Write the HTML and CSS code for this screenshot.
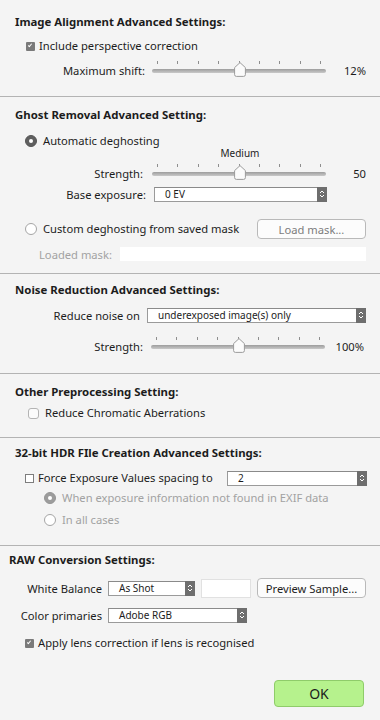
FILE: index.html
```html
<!DOCTYPE html>
<html lang="en">
<head>
    <meta charset="UTF-8">
    <meta name="viewport" content="width=device-width, initial-scale=1.0">
    <title>Advanced Settings</title>
    <link rel="stylesheet" href="styles.css">
</head>
<body>
    <main class="panel">

        <!-- image alignment -->
        <section class="group align">
            <h2>Image Alignment Advanced Settings:</h2>
            <label class="check ind-a"><span class="box box-on"></span>Include perspective correction</label>
            <div class="row slider-row">
                <span class="lbl">Maximum shift:</span>
                <div class="slider">
                    <div class="ticks"><i></i><i></i><i></i><i></i><i></i><i></i><i></i><i></i><i></i></div>
                    <div class="track"></div>
                    <svg class="knob" viewBox="0 0 12 15"><path d="M6 0.6 L11.4 5.6 V12.6 Q11.4 14.4 9.6 14.4 H2.4 Q0.6 14.4 0.6 12.6 V5.6 Z"/></svg>
                </div>
                <span class="val">12%</span>
            </div>
        </section>

        <!-- ghost removal -->
        <section class="group ghost">
            <h2>Ghost Removal Advanced Setting:</h2>
            <label class="check ind-r"><span class="radio radio-on"></span>Automatic deghosting</label>
            <div class="row slider-row medium-row">
                <span class="lbl">Strength:</span>
                <div class="slider">
                    <span class="tip">Medium</span>
                    <div class="ticks"><i></i><i></i><i></i><i></i><i></i><i></i><i></i><i></i><i></i></div>
                    <div class="track"></div>
                    <svg class="knob" viewBox="0 0 12 15"><path d="M6 0.6 L11.4 5.6 V12.6 Q11.4 14.4 9.6 14.4 H2.4 Q0.6 14.4 0.6 12.6 V5.6 Z"/></svg>
                </div>
                <span class="val">50</span>
            </div>
            <div class="row exposure-row">
                <span class="lbl">Base exposure:</span>
                <div class="select sel-exposure"><span>0 EV</span><b class="cap"><svg viewBox="0 0 8 12"><path d="M2 5 L4 3 L6 5 M2 7 L4 9 L6 7"/></svg></b></div>
            </div>
            <div class="row custom-row">
                <label class="check ind-r"><span class="radio"></span>Custom deghosting from saved mask</label>
                <button class="btn btn-off">Load mask...</button>
            </div>
            <div class="row mask-row">
                <span class="muted">Loaded mask:</span>
                <div class="field field-mask"></div>
            </div>
        </section>

        <!-- noise reduction -->
        <section class="group noise">
            <h2>Noise Reduction Advanced Settings:</h2>
            <div class="row noise-row">
                <span class="lbl">Reduce noise on</span>
                <div class="select sel-noise"><span>underexposed image(s) only</span><b class="cap"><svg viewBox="0 0 8 12"><path d="M2 5 L4 3 L6 5 M2 7 L4 9 L6 7"/></svg></b></div>
            </div>
            <div class="row slider-row">
                <span class="lbl">Strength:</span>
                <div class="slider">
                    <div class="ticks"><i></i><i></i><i></i><i></i><i></i><i></i><i></i><i></i><i></i></div>
                    <div class="track"></div>
                    <svg class="knob" viewBox="0 0 12 15"><path d="M6 0.6 L11.4 5.6 V12.6 Q11.4 14.4 9.6 14.4 H2.4 Q0.6 14.4 0.6 12.6 V5.6 Z"/></svg>
                </div>
                <span class="val">100%</span>
            </div>
        </section>

        <!-- other -->
        <section class="group other">
            <h2>Other Preprocessing Setting:</h2>
            <label class="check ind-c"><span class="box box-round"></span>Reduce Chromatic Aberrations</label>
        </section>

        <!-- 32 bit -->
        <section class="group hdr">
            <h2>32-bit HDR FIle Creation Advanced Settings:</h2>
            <div class="row force-row">
                <label class="check ind-r"><span class="box box-thin"></span>Force Exposure Values spacing to</label>
                <div class="select sel-force"><span>2</span><b class="cap"><svg viewBox="0 0 8 12"><path d="M2 5 L4 3 L6 5 M2 7 L4 9 L6 7"/></svg></b></div>
            </div>
            <label class="check ind-sub muted"><span class="radio radio-dis"></span>When exposure information not found in EXIF data</label>
            <label class="check ind-sub muted all-row"><span class="radio"></span>In all cases</label>
        </section>

        <!-- raw -->
        <section class="group raw">
            <h2>RAW Conversion Settings:</h2>
            <div class="row wb-row">
                <span class="lbl">White Balance</span>
                <div class="select sel-wb"><span>As Shot</span><b class="cap"><svg viewBox="0 0 8 12"><path d="M2 5 L4 3 L6 5 M2 7 L4 9 L6 7"/></svg></b></div>
                <div class="field field-wb"></div>
                <button class="btn">Preview Sample...</button>
            </div>
            <div class="row cp-row">
                <span class="lbl">Color primaries</span>
                <div class="select sel-cp"><span>Adobe RGB</span><b class="cap"><svg viewBox="0 0 8 12"><path d="M2 5 L4 3 L6 5 M2 7 L4 9 L6 7"/></svg></b></div>
            </div>
            <label class="check ind-r lens-row"><span class="box box-on"></span>Apply lens correction if lens is recognised</label>
            <div class="actions">
                <button class="ok">OK</button>
            </div>
        </section>

    </main>
</body>
</html>
```

FILE: styles.css
```css
:root {
--bg: #f4f4f4;
--line: #b3b3b3;
--ink: #1c1c1c;
--grey: #a2a2a2;
--cap: #6e6e6e;
}

*,
*::before,
*::after {
box-sizing: border-box;
}

body {
margin: 0;
background: var(--bg);
font-family: "Noto Sans", "DejaVu Sans", sans-serif;
font-size: 11.2px;
color: var(--ink);
}

.panel {
width: 380px;
height: 720px;
display: flex;
flex-direction: column;
}

.group {
display: flex;
flex-direction: column;
border-bottom: 1px solid var(--line);
padding-left: 15px;
padding-right: 14px;
}

h2 {
margin: 0;
font-size: 11.4px;
font-weight: 700;
line-height: 16px;
height: 16px;
}

.row {
display: flex;
align-items: center;
}

.check {
display: flex;
align-items: center;
height: 16px;
line-height: 16px;
white-space: nowrap;
}

.muted {
color: var(--grey);
}

.ind-a { margin-left: 11px; }
.ind-r { margin-left: 10px; }
.ind-c { margin-left: 13px; }
.ind-sub { margin-left: 29px; }

/* checkboxes + radios */
.box {
flex: none;
width: 9px;
height: 9px;
margin-right: 4px;
position: relative;
}

.box-on {
background: #7a7a7a;
border-radius: 1px;
}

.box-on::after {
content: "";
position: absolute;
left: 3px;
top: 1px;
width: 2px;
height: 4px;
border: solid #fff;
border-width: 0 1px 1px 0;
transform: rotate(40deg);
}

.box-round {
width: 11px;
height: 11px;
border: 1px solid #b4b4b4;
border-radius: 3px;
background: #fbfbfb;
margin-right: 6px;
}

.box-thin {
border: 1px solid #7d7d7d;
background: #fff;
}

.radio {
flex: none;
width: 12px;
height: 12px;
border-radius: 50%;
border: 1px solid #a5a5a5;
background: #fff;
margin-right: 6px;
position: relative;
}

.radio-on {
background: #5f5f5f;
border-color: #555;
}

.radio-on::after,
.radio-dis::after {
content: "";
position: absolute;
left: 3px;
top: 3px;
width: 4px;
height: 4px;
border-radius: 50%;
background: #fff;
}

.radio-dis {
background: #9c9c9c;
border-color: #959595;
}

/* label column */
.lbl {
flex: none;
text-align: right;
white-space: nowrap;
}

/* slider */
.slider-row {
height: 20px;
}

.slider {
position: relative;
width: 174px;
height: 20px;
}

.ticks {
display: flex;
justify-content: space-between;
padding: 0 5px 0 5px;
height: 4px;
margin-top: 1px;
}

.ticks i {
width: 1px;
height: 3px;
background: #8e8e8e;
}

.track {
margin-top: 4px;
height: 4px;
border-radius: 2px;
background: linear-gradient(#9d9d9d, #c9c9c9);
}

.knob {
position: absolute;
left: 82px;
top: 2px;
width: 12px;
height: 15px;
}

.knob path {
fill: #fbfbfb;
stroke: #9b9b9b;
stroke-width: 1;
}

.tip {
position: absolute;
left: 66px;
top: -16px;
width: 44px;
text-align: center;
font-size: 10px;
line-height: 12px;
}

.val {
flex: none;
width: 40px;
text-align: right;
}

/* select */
.select {
display: flex;
align-items: center;
height: 15px;
border: 1px solid #9a9a9a;
border-top-color: #8a8a8a;
background: #fff;
font-size: 10px;
padding-left: 10px;
}

.select span {
flex: 1;
white-space: nowrap;
}

.cap {
flex: none;
width: 10px;
height: 15px;
margin-right: -1px;
background: var(--cap);
display: flex;
align-items: center;
justify-content: center;
}

.cap svg {
width: 8px;
height: 12px;
}

.cap path {
fill: none;
stroke: #fff;
stroke-width: 1;
}

/* buttons */
.btn {
height: 20px;
padding: 0;
border: 1px solid #b9b9b9;
border-radius: 4px;
background: #fcfcfc;
font-family: inherit;
font-size: 11.2px;
color: var(--ink);
}

.btn-off {
color: #7c7c7c;
}

.field {
height: 14px;
background: #fff;
}

/* section 1 */
.align {
padding-top: 14px;
height: 97px;
}

.align .check { margin-top: 8px; }
.align .slider-row { margin-top: 6px; }
.align .lbl { width: 130px; }
.align .slider { margin-left: 7px; }

/* section 2 */
.ghost {
padding-top: 10px;
height: 177px;
}

.ghost > .check { margin-top: 10px; }
.ghost .medium-row { margin-top: 14px; }
.medium-row .lbl { width: 128px; }
.medium-row .slider { margin-left: 9px; }
.exposure-row { margin-top: 3px; height: 16px; }
.exposure-row .lbl { width: 131px; }
.sel-exposure { width: 173px; margin-left: 8px; }
.custom-row { margin-top: 17px; height: 20px; justify-content: space-between; }
.custom-row .btn { width: 109px; }
.mask-row { margin-top: 8px; height: 14px; }
.mask-row .muted { margin-left: 24px; width: 81px; }
.field-mask { flex: 1; }

/* section 3 */
.noise {
padding-top: 8px;
height: 100px;
}

.noise-row { margin-top: 9px; height: 16px; }
.noise-row .lbl { width: 125px; }
.sel-noise { width: 220px; margin-left: 7px; }
.noise .slider-row { margin-top: 13px; }
.noise .slider-row .lbl { width: 128px; }
.noise .slider { margin-left: 8px; }
.noise .val { width: 39px; }

/* section 4 */
.other {
padding-top: 10px;
height: 64px;
}

.other .check { margin-top: 5px; }

/* section 5 */
.hdr {
padding-top: 7px;
height: 108px;
}

.force-row { margin-top: 9px; height: 16px; }
.sel-force { width: 140px; margin-left: auto; margin-right: -1px; }
.hdr > .check { margin-top: 4px; }
.hdr > .all-row { margin-top: 6px; }

/* section 6 */
.raw {
padding-top: 6px;
padding-left: 9px;
border-bottom: none;
flex: 1;
}

.wb-row { margin-top: 10px; height: 20px; }
.wb-row .lbl, .cp-row .lbl { width: 93px; margin-right: 6px; }
.sel-wb { width: 87px; }
.field-wb { width: 50px; height: 19px; margin-left: 6px; border: 1px solid #e1e1e1; }
.wb-row .btn { width: 109px; margin-left: 6px; }
.cp-row { margin-top: 9px; height: 16px; }
.sel-cp { width: 139px; }
.lens-row { margin-top: 12px; margin-left: 16px; }

.actions {
display: flex;
justify-content: flex-end;
margin-top: 29px;
}

.ok {
width: 90px;
height: 27px;
margin-right: 2px;
border: 1px solid #8fcc6a;
border-radius: 4px;
background: #b6f28d;
font-family: inherit;
font-size: 14px;
color: var(--ink);
}
```
